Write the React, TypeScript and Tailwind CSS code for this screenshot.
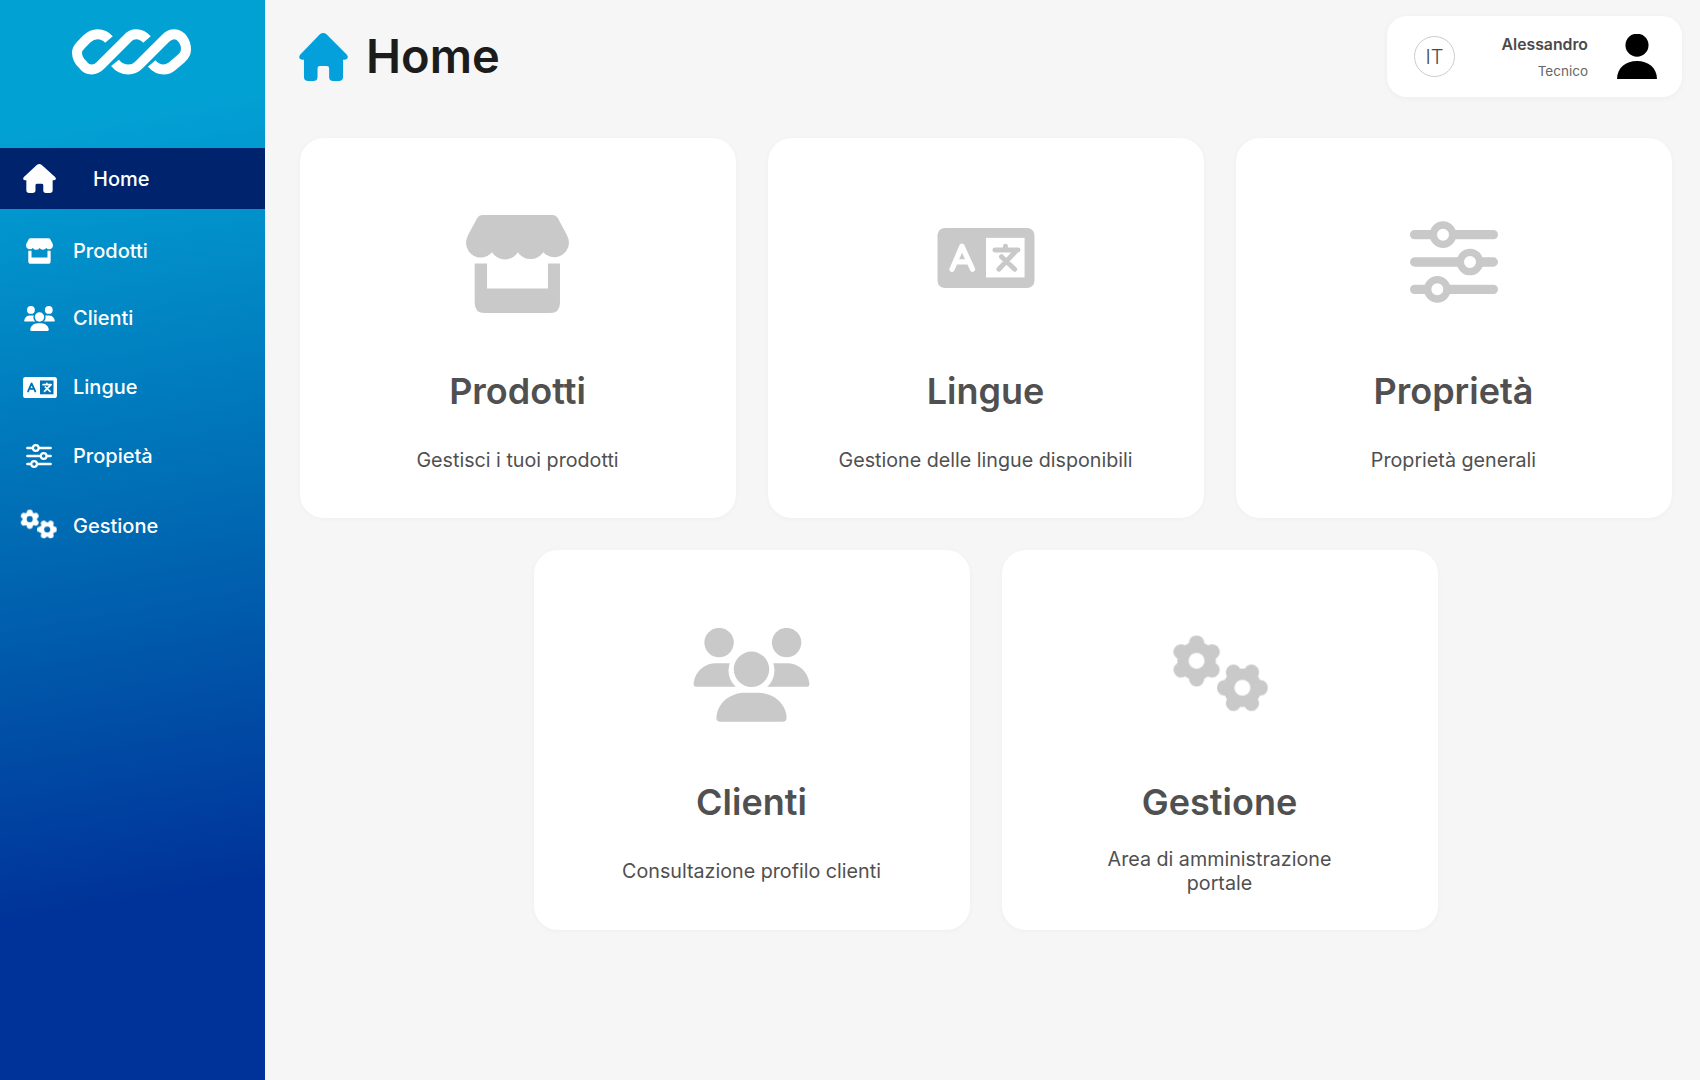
import React, { useId } from 'react';

type IconProps = { className?: string; cut?: string };

const HomeIcon: React.FC<IconProps> = ({ className }) => (
  <svg viewBox="57 100 148 143" preserveAspectRatio="none" className={className} fill="currentColor">
    <path d="M130 100Q135 100 140 104L201 164Q210 176 196 180H190V230Q190 243 177 243H160Q148 243 148 230V205Q148 198 141 198H120Q113 198 113 205V230Q113 243 100 243H85Q72 243 72 230V180H66Q52 176 61 164L120 104Q125 100 130 100Z" />
  </svg>
);

const StoreIcon: React.FC<IconProps> = ({ className }) => (
  <svg viewBox="77 75 308 293" className={className} fill="currentColor">
    <path d="M125 75H337Q346 75 351 83L378 133Q385 147 385 158A44 44 0 0 1 308 186A45 45 0 0 1 232 186A45 45 0 0 1 155 186A44 44 0 0 1 77 158Q77 147 84 133L111 83Q116 75 125 75Z" />
    <path d="M103 220H140V295H322V220H358V338Q358 368 328 368H133Q103 368 103 338Z" />
  </svg>
);

const LangIcon: React.FC<IconProps> = ({ className, cut = '#ffffff' }) => (
  <svg viewBox="78 83 294 182" className={className} fill="none">
    <rect x="78" y="83" width="294" height="182" rx="22" fill="currentColor" />
    <rect x="225" y="113" width="117" height="120" fill={cut} />
    <path d="M122 208L152 138L184 208M134 186H172" stroke={cut} strokeWidth="16" strokeLinecap="round" strokeLinejoin="round" />
    <path d="M252 150H322M284 138V150M314 155L264 208M272 170L312 208" stroke="currentColor" strokeWidth="15" strokeLinecap="round" />
  </svg>
);

const SlidersIcon: React.FC<IconProps> = ({ className }) => (
  <svg viewBox="88 62 264 246" className={className} fill="none" stroke="currentColor">
    <path d="M102 103H150M224 103H338M102 185H231M305 185H338M102 267H133M207 267H338" strokeWidth="28" strokeLinecap="round" />
    <circle cx="187" cy="103" r="29" strokeWidth="22" />
    <circle cx="268" cy="185" r="29" strokeWidth="22" />
    <circle cx="170" cy="267" r="29" strokeWidth="22" />
  </svg>
);

const UsersIcon: React.FC<IconProps> = ({ className }) => (
  <svg viewBox="40 55 350 280" className={className} fill="currentColor">
    <circle cx="118" cy="98" r="44" />
    <circle cx="320" cy="98" r="44" />
    <circle cx="215" cy="178" r="53" />
    <path d="M50 230Q40 230 42 218C48 182 75 160 110 160H150A66 66 0 0 0 168 230Z" />
    <path d="M380 230Q390 230 388 218C382 182 355 160 320 160H280A66 66 0 0 1 262 230Z" />
    <path d="M122 335Q110 335 110 322C112 280 150 248 195 248H235C280 248 318 280 320 322Q320 335 308 335Z" />
  </svg>
);

const Gear: React.FC<{ cx: number; cy: number; start: number }> = ({ cx, cy, start }) => (
  <g>
    <circle cx={cx} cy={cy} r="58" fill="currentColor" />
    {[0, 60, 120].map(a => (
      <line
        key={a}
        x1={cx - 54}
        y1={cy}
        x2={cx + 54}
        y2={cy}
        stroke="currentColor"
        strokeWidth="46"
        strokeLinecap="round"
        transform={`rotate(${a + start} ${cx} ${cy})`}
      />
    ))}
  </g>
);

const GearsIcon: React.FC<IconProps> = ({ className }) => {
  const id = useId();
  return (
    <svg viewBox="60 45 292 230" className={className}>
      <mask id={id}>
        <rect x="60" y="45" width="292" height="230" fill="white" />
        <circle cx="137" cy="122" r="24" fill="black" />
        <circle cx="275" cy="203" r="24" fill="black" />
      </mask>
      <g mask={`url(#${id})`}>
        <Gear cx={137} cy={122} start={30} />
        <Gear cx={275} cy={203} start={0} />
      </g>
    </svg>
  );
};

const Logo = () => (
  <svg viewBox="215 85 357 137" className="w-[119px] h-[46px]" fill="none" stroke="white" strokeWidth="30" strokeLinecap="butt">
    <path d="M326 116Q312 100 292 100Q274 100 260 114L243 131Q230 144 230 155Q230 176 248 192Q258 206 274 206Q288 206 300 194L382 112Q392 100 408 100Q426 100 440 116" />
    <path d="M344 186Q360 206 384 206Q402 206 414 194L496 112Q508 100 522 100Q538 100 548 116Q557 128 557 146Q557 160 544 172L516 196Q504 206 490 206Q470 206 454 188" />
  </svg>
);

const navItems = [
  { label: 'Prodotti', row: 'h-[69px]', icon: <StoreIcon className="w-[27px] h-[26px]" /> },
  { label: 'Clienti', row: 'h-[66px]', icon: <UsersIcon className="w-[31px] h-[25px]" /> },
  { label: 'Lingue', row: 'h-[72px]', icon: <LangIcon className="w-[34px] h-[21px] ml-[2px]" cut="#0074b8" /> },
  { label: 'Propietà', row: 'h-[65px]', icon: <SlidersIcon className="w-[26px] h-[24px]" /> },
  { label: 'Gestione', row: 'h-[75px]', icon: <GearsIcon className="w-[37px] h-[30px] -mt-[3px] -ml-[1px]" /> },
];

const Card: React.FC<{ icon: React.ReactNode; title: string; text: React.ReactNode; lower?: boolean }> = ({ icon, title, text, lower }) => (
  <div className="w-[436px] h-[380px] bg-white rounded-[24px] shadow-[0_1px_6px_rgba(0,0,0,0.03)] flex flex-col items-center pt-[70px] text-[#505050]">
    <div className="h-[110px] flex items-center justify-center text-[#c9c9c9]">{icon}</div>
    <h2 className={`${lower ? 'mt-[50px]' : 'mt-[51px]'} text-[36px] leading-[44px] font-semibold`}>{title}</h2>
    <div className="mt-[23px] h-[48px] flex items-center justify-center text-center text-[19.7px] leading-[24px]">{text}</div>
  </div>
);

export default function App() {
  return (
    <div className="w-[1700px] h-[1080px] flex overflow-hidden bg-[#f6f6f6] font-['Inter','Noto_Sans',sans-serif]">
      <aside className="w-[265px] h-full shrink-0 bg-[linear-gradient(170deg,#02a1d4_12%,#0068b2_50%,#003399_82%)] text-white">
        <div className="h-[148px] pt-[29px] pr-[3px] flex justify-center">
          <Logo />
        </div>
        <div className="h-[61px] bg-[#00236e] flex items-center pl-[23px]">
          <HomeIcon className="w-[33px] h-[29px]" />
          <span className="ml-[37px] text-[20px] font-medium">Home</span>
        </div>
        <nav className="mt-[7px]">
          {navItems.map(item => (
            <div key={item.label} className={`${item.row} flex items-center pl-[20px]`}>
              <div className="w-[38px] flex justify-center">{item.icon}</div>
              <span className="ml-[15px] text-[20px] font-medium">{item.label}</span>
            </div>
          ))}
        </nav>
      </aside>

      <main className="flex-1">
        <header className="h-[97px] pt-[16px] pl-[34px] pr-[18px] flex justify-between">
          <div className="flex items-center h-[81px] gap-[18px]">
            <HomeIcon className="w-[49px] h-[48px] text-[#04a0db]" />
            <h1 className="text-[47px] font-semibold text-[#1c1c1c] -mt-[1px]">Home</h1>
          </div>
          <div className="w-[295px] h-[81px] bg-white rounded-[20px] shadow-[0_1px_6px_rgba(0,0,0,0.04)] flex items-center pl-[27px] pr-[25px]">
            <div className="w-[41px] h-[41px] rounded-full border border-[#cccccc] flex items-center justify-center text-[20px] font-light text-[#4a4a4a]">IT</div>
            <div className="ml-auto mt-[2px] flex flex-col items-end text-[#4a4a4a]">
              <span className="text-[15.8px] leading-[20px] font-semibold">Alessandro</span>
              <span className="mt-[6px] text-[13.5px] leading-[20px] text-[#666666]">Tecnico</span>
            </div>
            <svg viewBox="714 100 118 133" className="ml-[29px] w-[40px] h-[45px]" fill="black">
              <circle cx="773" cy="133" r="34" />
              <path d="M714 233C714 200 740 180 773 180C806 180 832 200 832 233Z" />
            </svg>
          </div>
        </header>

        <div className="mt-[41px] pl-[34px] pr-[28px] flex flex-wrap justify-center gap-[32px]">
          <Card icon={<StoreIcon className="w-[103px] h-[98px] mt-[2px]" />} title="Prodotti" text="Gestisci i tuoi prodotti" />
          <Card icon={<LangIcon className="w-[98px] h-[60px] mb-[10px]" />} title="Lingue" text="Gestione delle lingue disponibili" />
          <Card icon={<SlidersIcon className="w-[88px] h-[82px] mb-[2px]" />} title="Proprietà" text="Proprietà generali" />
          <Card lower icon={<UsersIcon className="w-[117px] h-[94px]" />} title="Clienti" text="Consultazione profilo clienti" />
          <Card lower icon={<GearsIcon className="w-[97px] h-[77px] mb-[4px]" />} title="Gestione" text={<>Area di amministrazione<br />portale</>} />
        </div>
      </main>
    </div>
  );
}
